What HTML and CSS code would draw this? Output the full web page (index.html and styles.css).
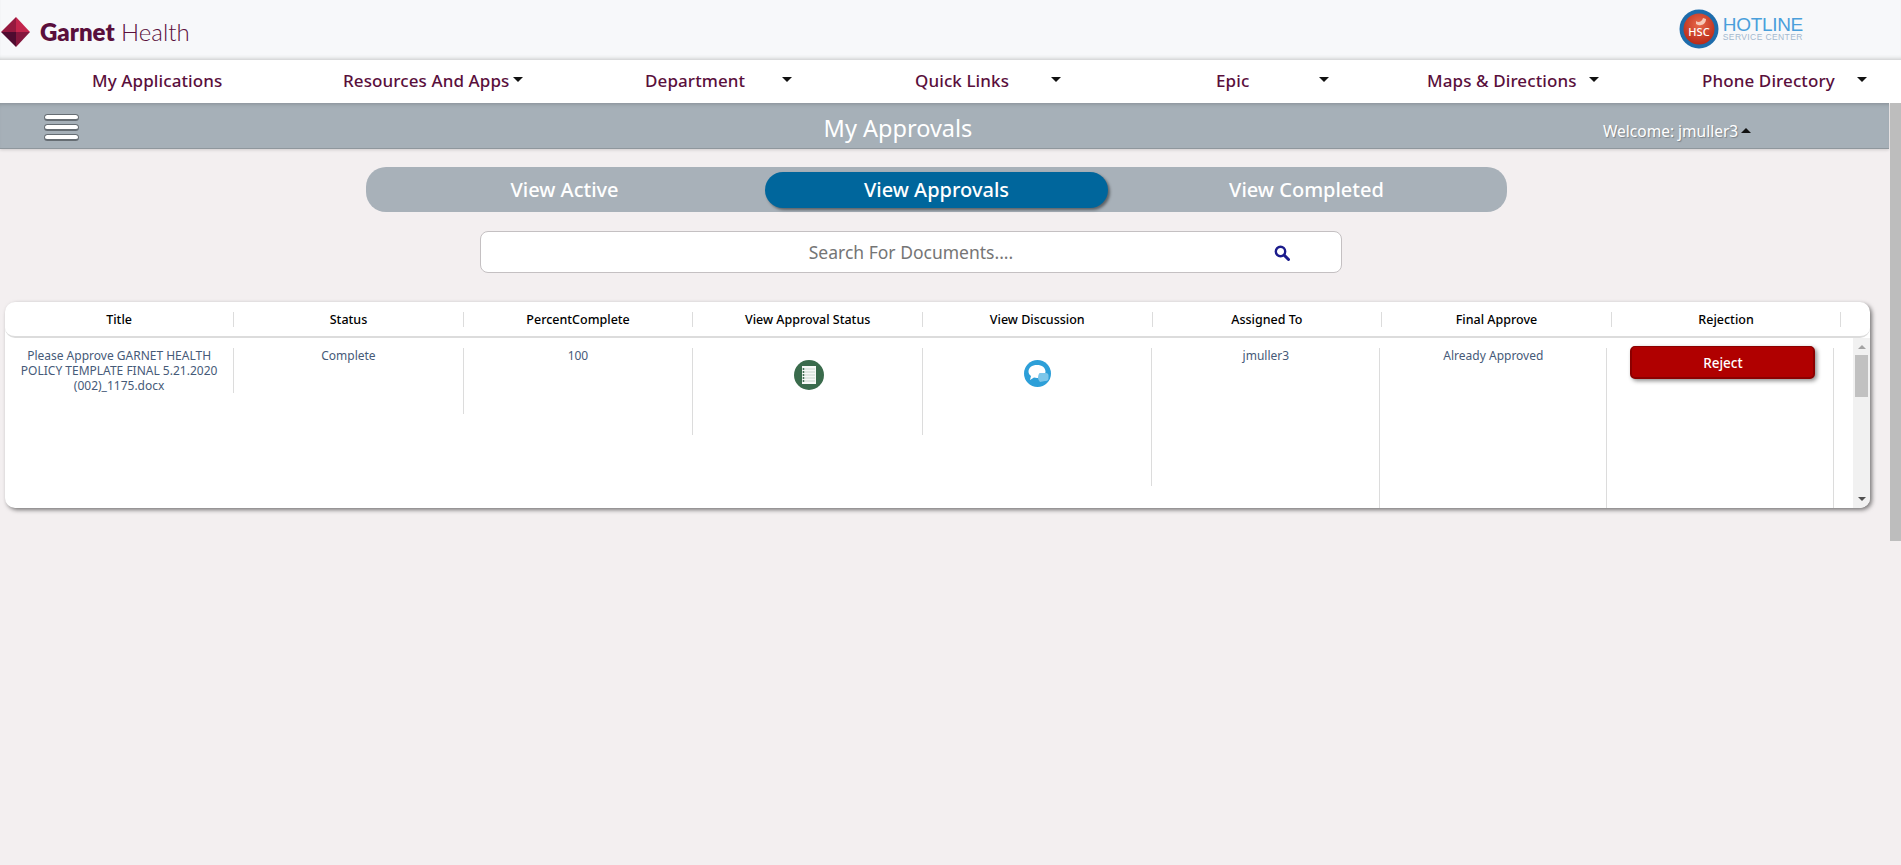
FILE: index.html
```html
<!DOCTYPE html>
<html lang="en">
<head>
    <meta charset="UTF-8">
    <meta name="viewport" content="width=device-width, initial-scale=1.0">
    <title>My Approvals</title>
    <link rel="stylesheet" href="styles.css">
</head>
<body>
    <header class="top-header">
        <div class="brand">
            <svg class="brand-mark" width="30" height="30" viewBox="0 0 30 30">
                <polygon points="15,0 15,15 0,15" fill="#96193f"/>
                <polygon points="15,0 29,15 15,15" fill="#c3254c"/>
                <polygon points="0,15 15,15 15,30" fill="#4f0b30"/>
                <polygon points="15,15 29,15 15,30" fill="#85163d"/>
            </svg>
            <span class="brand-name"><b>Garnet</b> Health</span>
        </div>
        <div class="hotline">
            <svg class="hotline-badge" width="40" height="40" viewBox="0 0 40 40">
                <defs>
                    <radialGradient id="hsc-red" cx="50%" cy="35%" r="65%">
                        <stop offset="0" stop-color="#e8694a"/>
                        <stop offset="1" stop-color="#b92a18"/>
                    </radialGradient>
                </defs>
                <circle cx="20" cy="20" r="19.5" fill="#1d6cab"/>
                <circle cx="20" cy="20" r="15.5" fill="url(#hsc-red)"/>
                <path d="M17 12c2 2 6 1 7-3l3 1c0 5-5 8-10 5z" fill="#f6c9b8"/>
                <text x="20" y="27" text-anchor="middle" class="hotline-badge-text">HSC</text>
            </svg>
            <div class="hotline-text">
                <div class="hotline-name">HOTLINE</div>
                <div class="hotline-sub">SERVICE CENTER</div>
            </div>
        </div>
    </header>

    <nav class="main-nav">
        <a class="nav-item nav-apps">My Applications</a>
        <a class="nav-item nav-resources">Resources And Apps<i class="caret"></i></a>
        <a class="nav-item nav-department">Department<i class="caret"></i></a>
        <a class="nav-item nav-links">Quick Links<i class="caret"></i></a>
        <a class="nav-item nav-epic">Epic<i class="caret"></i></a>
        <a class="nav-item nav-maps">Maps &amp; Directions<i class="caret"></i></a>
        <a class="nav-item nav-phone">Phone Directory<i class="caret"></i></a>
    </nav>

    <div class="shell">
        <main class="content">
            <div class="title-bar">
                <div class="hamburger"><span></span><span></span><span></span></div>
                <h1 class="page-title">My Approvals</h1>
                <div class="welcome">Welcome: jmuller3<i class="caret-up"></i></div>
            </div>

            <div class="tabs">
                <a class="tab">View Active</a>
                <a class="tab tab-active">View Approvals</a>
                <a class="tab">View Completed</a>
            </div>

            <div class="search-box">
                <span class="search-text">Search For Documents....</span>
                <svg class="search-icon" width="16" height="16" viewBox="0 0 16 16">
                    <circle cx="6.5" cy="6.5" r="4.7" fill="none" stroke="#1c1c8c" stroke-width="2.4"/>
                    <line x1="10" y1="10" x2="14.5" y2="14.5" stroke="#1c1c8c" stroke-width="3" stroke-linecap="round"/>
                </svg>
            </div>

            <section class="grid-card">
                <div class="grid-head">
                    <div class="head-cell">Title</div>
                    <div class="head-cell">Status</div>
                    <div class="head-cell">PercentComplete</div>
                    <div class="head-cell">View Approval Status</div>
                    <div class="head-cell">View Discussion</div>
                    <div class="head-cell">Assigned To</div>
                    <div class="head-cell">Final Approve</div>
                    <div class="head-cell">Rejection</div>
                </div>
                <div class="grid-body">
                    <div class="cell cell-title">Please Approve GARNET HEALTH POLICY TEMPLATE FINAL 5.21.2020 (002)_1175.docx</div>
                    <div class="cell cell-status">Complete</div>
                    <div class="cell cell-percent">100</div>
                    <div class="cell cell-approval">
                        <svg class="cell-icon" width="30" height="30" viewBox="0 0 30 30">
                            <circle cx="15" cy="15" r="15" fill="#3a6b4c"/>
                            <rect x="8" y="6" width="14" height="18" fill="#f7f9f7"/>
                            <g stroke="#c9d6cd" stroke-width="1">
                                <line x1="11" y1="9" x2="21" y2="9"/>
                                <line x1="11" y1="12" x2="21" y2="12"/>
                                <line x1="11" y1="15" x2="21" y2="15"/>
                                <line x1="11" y1="18" x2="21" y2="18"/>
                                <line x1="11" y1="21" x2="21" y2="21"/>
                            </g>
                            <g fill="#3a6b4c">
                                <circle cx="9.5" cy="9" r="1"/>
                                <circle cx="9.5" cy="12" r="1"/>
                                <circle cx="9.5" cy="15" r="1"/>
                                <circle cx="9.5" cy="18" r="1"/>
                                <circle cx="9.5" cy="21" r="1"/>
                            </g>
                        </svg>
                    </div>
                    <div class="cell cell-discussion">
                        <svg class="cell-icon" width="27" height="27" viewBox="0 0 27 27">
                            <circle cx="13.5" cy="13.5" r="13.5" fill="#2d9fd8"/>
                            <path d="M13 5c5 0 8.500 2.700 8.500 6.500S18 18 13 18c-1 0-2-.1-3-.4L6 20l1-4c-1.700-1.200-2.500-2.800-2.500-4.500C4.500 7.700 8 5 13 5z" fill="#fff"/>
                            <path d="M16 13h6c1.500 0 2.500 1 2.500 2.500v3c0 1.500-1 2.500-2.500 2.500h-1l-5 1c-1-1.500-2-2.500-2-4 0-3 1-5 2-5z" fill="#7cc6ea"/>
                        </svg>
                    </div>
                    <div class="cell cell-assigned">jmuller3</div>
                    <div class="cell cell-final">Already Approved</div>
                    <div class="cell cell-reject"><button class="reject-btn">Reject</button></div>
                    <div class="grid-scroll">
                        <i class="arrow-up"></i>
                        <div class="grid-thumb"></div>
                        <i class="arrow-down"></i>
                    </div>
                </div>
            </section>
        </main>
        <div class="page-scroll"></div>
    </div>
</body>
</html>
```

FILE: styles.css
```css
html, body {
    margin: 0;
    padding: 0;
    height: 100%;
    overflow: hidden;
}
body {
    font-family: "Noto Sans", "Open Sans", Arial, sans-serif;
    background-color: #f3eff0;
}

/* top header */
.top-header {
    height: 60px;
    background-color: #f7f8fa;
    box-shadow: inset 0 -4px 4px -3px #c4c6c6;
    display: flex;
    justify-content: space-between;
    box-sizing: border-box;
    position: relative;
}
.brand {
    display: flex;
    align-items: center;
    padding-left: 1px;
    height: 63px;
}
.brand-mark {
    display: block;
}
.brand-name {
    font-family: Lato, sans-serif;
    font-size: 24px;
    font-weight: 300;
    color: #5a0f3c;
    margin-left: 9px;
}
.brand-name b {
    font-weight: 800;
}
.hotline {
    display: flex;
    padding: 9px 98px 0 0;
}
.hotline-badge {
    display: block;
}
.hotline-badge-text {
    font-family: "Noto Sans", sans-serif;
    font-size: 11px;
    font-weight: 500;
    fill: #fff;
}
.hotline-text {
    margin-left: 4px;
    padding-top: 7px;
    font-family: "Liberation Sans", Arial, sans-serif;
}
.hotline-name {
    font-size: 19px;
    line-height: 17px;
    letter-spacing: -0.3px;
    color: #4a9fdb;
}
.hotline-sub {
    font-size: 8.5px;
    line-height: 9px;
    letter-spacing: 0.4px;
    color: #a3b9cf;
}

/* menu */
.main-nav {
    height: 43px;
    background-color: #fff;
    display: flex;
    align-items: center;
    box-sizing: border-box;
    padding: 0 0 2px 92px;
    position: relative;
}
.nav-item {
    display: flex;
    align-items: center;
    justify-content: space-between;
    font-size: 17px;
    letter-spacing: 0.1px;
    font-weight: 500;
    color: #5a0f3c;
    white-space: nowrap;
}
.nav-apps { width: 131px; margin-right: 120px; }
.nav-resources { width: 180px; margin-right: 122px; }
.nav-department { width: 147px; margin-right: 123px; }
.nav-links { width: 146px; margin-right: 155px; }
.nav-epic { width: 113px; margin-right: 98px; }
.nav-maps { width: 172px; margin-right: 103px; }
.nav-phone { width: 165px; }
.caret {
    width: 0;
    height: 0;
    border-left: 5px solid transparent;
    border-right: 5px solid transparent;
    border-top: 5px solid #111;
    margin-top: -2px;
}

.shell {
    display: flex;
    align-items: flex-start;
}
.content {
    width: 1889px;
}
.page-scroll {
    width: 11px;
    height: 438px;
    margin-left: 1px;
    background-color: #bdbdbd;
}

/* title bar */
.title-bar {
    height: 46px;
    background-color: #a6b0b8;
    border-bottom: 1px solid #8f979d;
    box-shadow: inset 0 4px 4px -3px #868e94, 0 1px 3px rgba(0, 0, 0, 0.15);
    box-sizing: border-box;
    display: grid;
    grid-template-columns: 656px 396px 1fr;
    align-items: center;
    padding-left: 44px;
}
.hamburger {
    display: flex;
    flex-direction: column;
    gap: 3px;
    width: 35px;
    margin-top: 4px;
}
.hamburger span {
    height: 7px;
    background-color: #fff;
    border: 1px solid #666d73;
    border-bottom-width: 2px;
    border-radius: 4px;
    box-sizing: border-box;
}
.page-title {
    margin: 4px 0 0;
    text-align: center;
    font-size: 23.5px;
    font-weight: 400;
    color: #fff;
}
.welcome {
    display: flex;
    align-items: center;
    margin-left: 507px;
    margin-top: 10px;
    font-size: 15.5px;
    color: #fff;
    text-shadow: 1px 1px 1px #7a8288;
    white-space: nowrap;
}
.caret-up {
    width: 0;
    height: 0;
    border-left: 5px solid transparent;
    border-right: 5px solid transparent;
    border-bottom: 5px solid #111;
    margin-left: 3px;
}

/* tabs */
.tabs {
    width: 1141px;
    height: 45px;
    margin: 18px 0 0 366px;
    padding: 5px 13px;
    box-sizing: border-box;
    background-color: #a8b1b9;
    border-radius: 20px;
    display: grid;
    grid-template-columns: repeat(3, 371px);
}
.tab {
    height: 36px;
    line-height: 35px;
    margin: 0 14px;
    text-align: center;
    font-size: 20px;
    font-weight: 500;
    color: #fff;
    border-radius: 18px;
}
.tab-active {
    margin: 0 13px 0 15px;
    background-color: #00669c;
    box-shadow: 2px 2px 3px rgba(0, 0, 0, 0.45);
}

/* search */
.search-box {
    position: relative;
    width: 862px;
    height: 42px;
    margin: 19px 0 0 480px;
    box-sizing: border-box;
    background-color: #fff;
    border: 1px solid #c4c0c2;
    border-radius: 8px;
    display: flex;
    align-items: center;
    justify-content: center;
}
.search-text {
    font-size: 17.5px;
    color: #757575;
}
.search-icon {
    position: absolute;
    left: 793px;
    top: 13px;
}

/* table */
.grid-card {
    width: 1865px;
    height: 206px;
    margin: 29px 0 0 5px;
    background-color: #fff;
    border-radius: 10px;
    box-shadow: 2px 2px 4px rgba(0, 0, 0, 0.5);
    overflow: hidden;
}
.grid-head {
    height: 36px;
    box-sizing: border-box;
    padding-top: 10px;
    border-bottom: 2px solid #dcdcdc;
    border-radius: 0 0 10px 10px;
    display: grid;
    grid-template-columns: 229.2px repeat(7, 229.6px);
}
.head-cell {
    height: 15px;
    line-height: 15px;
    text-align: center;
    font-size: 12.5px;
    font-weight: 500;
    color: #000;
    border-right: 1px solid #dcdcdc;
}
.grid-body {
    display: flex;
    height: 170px;
    position: relative;
}
.cell {
    margin-top: 10px;
    box-sizing: border-box;
    text-align: center;
    font-size: 12px;
    line-height: 15px;
    color: #465a78;
    border-right: 1px solid #dcdcdc;
}
.cell-title { width: 229.2px; height: 45px; padding: 0 12px; }
.cell-status { width: 229.5px; height: 66px; }
.cell-percent { width: 229.5px; height: 87px; }
.cell-approval { width: 229.5px; height: 87px; padding-left: 3px; }
.cell-discussion { width: 229.7px; height: 138px; padding-left: 1px; }
.cell-assigned { width: 228px; height: 160px; }
.cell-final { width: 227px; height: 160px; }
.cell-reject { width: 227px; height: 160px; }
.cell-icon {
    display: block;
    margin: 12px auto 0;
}
.reject-btn {
    display: block;
    width: 185px;
    height: 33px;
    margin: -2px 0 0 23px;
    padding-top: 2px;
    font-family: inherit;
    font-size: 13.5px;
    font-weight: 500;
    color: #fff;
    background-color: #b00000;
    border: 2px solid #8b0000;
    border-top-width: 1px;
    border-radius: 5px;
    box-shadow: 2px 2px 4px rgba(0, 0, 0, 0.45);
}
.grid-scroll {
    position: absolute;
    right: 0;
    top: 0;
    bottom: 0;
    width: 17px;
    background-color: #f1f1f1;
}
.grid-thumb {
    position: absolute;
    left: 2px;
    top: 17px;
    width: 13px;
    height: 42px;
    background-color: #c1c1c1;
}
.arrow-up,
.arrow-down {
    position: absolute;
    left: 5px;
    width: 0;
    height: 0;
    border-left: 4px solid transparent;
    border-right: 4px solid transparent;
}
.arrow-up {
    top: 7px;
    border-bottom: 4px solid #a3a3a3;
}
.arrow-down {
    bottom: 7px;
    border-top: 4px solid #505050;
}
```
